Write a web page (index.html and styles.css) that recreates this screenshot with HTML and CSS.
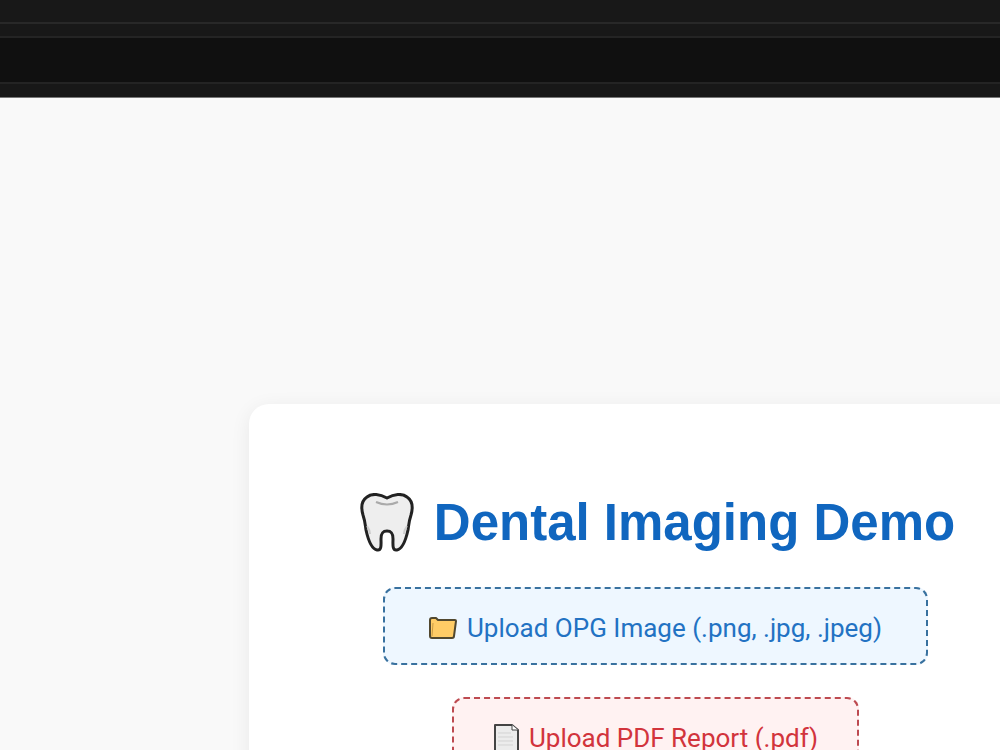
FILE: index.html
```html
<!DOCTYPE html>
<html lang="en">
<head>
<meta charset="utf-8">
<title>Dental Imaging Demo</title>
<link rel="stylesheet" href="styles.css">
</head>
<body>
<header class="chrome">
  <div class="chrome-tabs"></div>
  <div class="chrome-gap"></div>
  <div class="chrome-address"></div>
  <div class="chrome-base"></div>
</header>
<main class="card">
  <h1 class="title">
    <svg class="tooth" viewBox="0 0 54 60" aria-hidden="true">
      <path d="M27 5C20 1 12 0 7 4C1 8 1 15 3 22C5 28 5 30 6 37C8 46 11 56 17 57C22 58 21 51 21 46C21 41 22 38 27 38C32 38 33 41 33 46C33 51 32 58 37 57C43 56 46 46 48 37C49 30 49 28 51 22C53 15 53 8 47 4C42 0 34 1 27 5Z" fill="#eee" stroke="#222" stroke-width="3" stroke-linejoin="round"/>
      <path d="M16 9Q27 14 38 9" fill="none" stroke="#aaa" stroke-width="2"/>
      <path d="M7 33Q10 37 10 41M47 33Q44 37 44 41" fill="none" stroke="#ccc" stroke-width="2"/>
    </svg>
    <span>Dental Imaging Demo</span>
  </h1>
  <label class="upload upload-image">
    <input class="file" type="file" accept=".png,.jpg,.jpeg">
    <svg class="folder" viewBox="0 0 28 24" aria-hidden="true">
      <path d="M1 4Q1 2 3 2H7L9 4H26Q27 4 27 5L25 20Q25 22 23 22H3Q1 22 1 20Z" fill="#ffcc66" stroke="#51482f" stroke-width="2" stroke-linejoin="round"/>
      <path d="M4 7L3 20" stroke="#c99a43" stroke-width="1"/>
    </svg>
    <span>Upload OPG Image (.png, .jpg, .jpeg)</span>
  </label>
  <label class="upload upload-report">
    <input class="file" type="file" accept=".pdf">
    <svg class="page" viewBox="0 0 26 30" aria-hidden="true">
      <path d="M2 2H19L25 7V29H2Z" fill="#ececec" stroke="#444" stroke-width="2" stroke-linejoin="round"/>
      <path d="M19 2V7H25" fill="#fff" stroke="#444" stroke-width="1"/>
      <path d="M5 10H18M5 14H20M5 18H20M5 22H20" stroke="#d3d3d3" stroke-width="1"/>
    </svg>
    <span>Upload PDF Report (.pdf)</span>
  </label>
</main>
</body>
</html>
```
FILE: styles.css
```css
* { box-sizing: border-box; }

body {
  margin: 0;
  min-height: 100vh;
  overflow: hidden;
  background: #f9f9f9;
  font-family: "Liberation Sans", Arial, sans-serif;
}

.chrome { background: #181818; border-bottom: 1px solid #777; }
.chrome-tabs { height: 24px; border-bottom: 2px solid #282828; }
.chrome-gap { height: 14px; border-bottom: 2px solid #242424; }
.chrome-address { height: 46px; background: #101010; border-bottom: 2px solid #242424; }
.chrome-base { height: 13px; }

.card {
  display: flex;
  flex-direction: column;
  align-items: center;
  gap: 32px;
  margin: 306px -62px 0 249px;
  padding: 87px 80px;
  background: #fff;
  border-radius: 20px;
  box-shadow: 0 4px 20px rgba(0, 0, 0, 0.07);
}

.title {
  display: flex;
  align-items: center;
  gap: 20px;
  margin: 0;
  padding-left: 4px;
  color: #1066bf;
  font-size: 51px;
  line-height: 64px;
  white-space: nowrap;
}

.tooth { width: 54px; height: 60px; }

.upload {
  display: flex;
  align-items: center;
  gap: 10px;
  height: 78px;
  border: 2px dashed;
  border-radius: 12px;
  font-family: Roboto, sans-serif;
  font-size: 26px;
  line-height: 32px;
  white-space: nowrap;
  cursor: pointer;
}

.upload-image { padding: 4px 44px 0; border-color: #38719f; background: #eef7ff; color: #2272c3; }
.upload-report { padding: 4px 39px 0; border-color: #bd4a50; background: #fff2f2; color: #d2343c; }

.file {
  position: absolute;
  width: 1px;
  height: 1px;
  opacity: 0;
}

.folder { width: 28px; height: 24px; }
.page { width: 26px; height: 30px; }
```
